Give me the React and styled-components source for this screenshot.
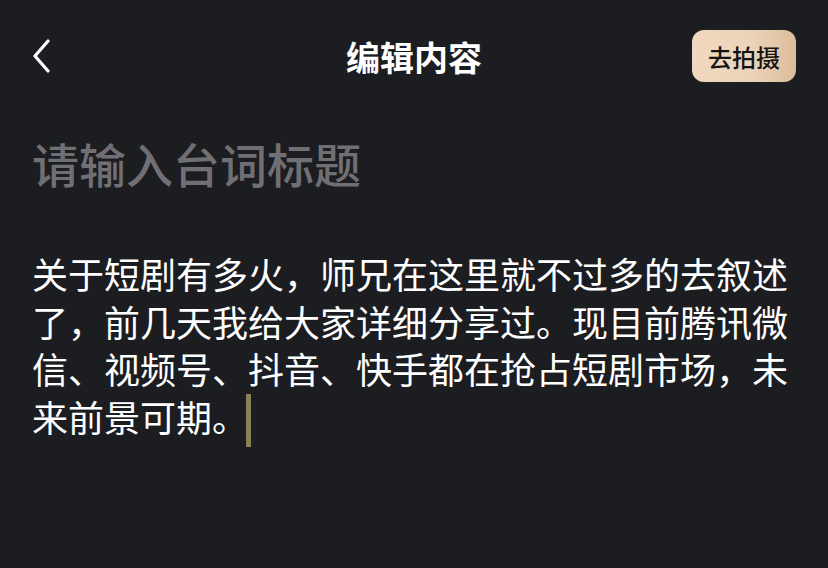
import React from 'react';
import styled, { createGlobalStyle } from 'styled-components';

const GlobalStyle = createGlobalStyle`
  html, body {
    margin: 0;
    padding: 0;
    background: #1c1d21;
  }
  body {
    font-family: "Noto Sans CJK SC", "Noto Sans", sans-serif;
  }
`;

const Page = styled.div`
  width: 828px;
  height: 568px;
  background: #1c1d21;
  display: flex;
  flex-direction: column;
  overflow: hidden;
`;

const Header = styled.div`
  height: 112px;
  padding: 0 32px;
  display: grid;
  grid-template-columns: 1fr auto 1fr;
  align-items: center;
  box-sizing: border-box;
`;

const BackButton = styled.button`
  justify-self: start;
  background: none;
  border: none;
  padding: 0;
  width: 24px;
  height: 36px;
  display: flex;
  align-items: center;
  color: #ffffff;
`;

const HeaderTitle = styled.h1`
  margin: 0;
  font-size: 34px;
  font-weight: 700;
  color: #ffffff;
`;

const ShootButton = styled.button`
  justify-self: end;
  width: 104px;
  height: 52px;
  border: none;
  border-radius: 12px;
  background: linear-gradient(90deg, #f1d9c0 0%, #ecd4bb 55%, #dcbd9c 100%);
  color: #151515;
  font-family: inherit;
  font-size: 24px;
  font-weight: 500;
  display: flex;
  align-items: center;
  justify-content: center;
`;

const Editor = styled.div`
  padding: 22px 32px 0;
  display: flex;
  flex-direction: column;
`;

const TitleInput = styled.div`
  font-size: 47px;
  font-weight: 500;
  line-height: 58px;
  color: #707074;
`;

const Body = styled.p`
  margin: 58px 0 0;
  font-size: 36px;
  line-height: 47.5px;
  color: #ffffff;
  width: 764px;
`;

const Caret = styled.span`
  display: inline-block;
  width: 5px;
  height: 53px;
  margin-left: -2px;
  vertical-align: -15px;
  background: #8a8254;
`;

const App = () => {
  return (
    <>
      <GlobalStyle />
      <Page>
        <Header>
          <BackButton aria-label="返回">
            <svg width="20" height="34" viewBox="0 0 20 34" fill="none">
              <path d="M16 2 L3 17 L16 32" stroke="currentColor" strokeWidth="3.2" strokeLinecap="round" strokeLinejoin="round" />
            </svg>
          </BackButton>
          <HeaderTitle>编辑内容</HeaderTitle>
          <ShootButton>去拍摄</ShootButton>
        </Header>
        <Editor>
          <TitleInput>请输入台词标题</TitleInput>
          <Body>
            关于短剧有多火，师兄在这里就不过多的去叙述了，前几天我给大家详细分享过。现目前腾讯微信、视频号、抖音、快手都在抢占短剧市场，未来前景可期。<Caret />
          </Body>
        </Editor>
      </Page>
    </>
  );
};

export default App;
